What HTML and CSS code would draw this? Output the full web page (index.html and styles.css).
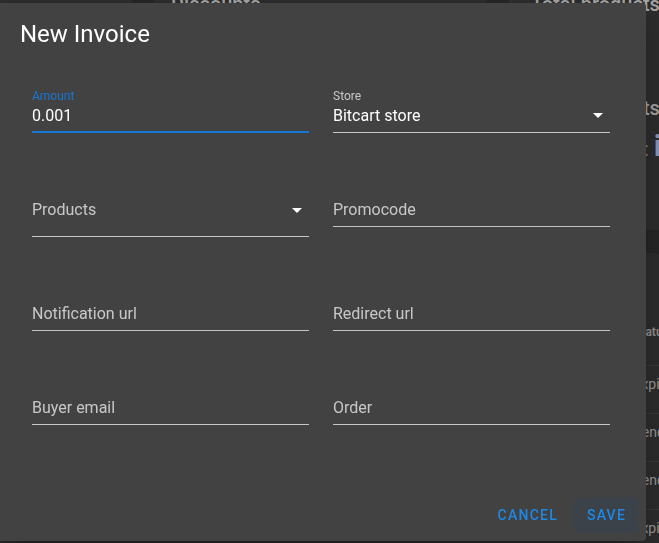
FILE: index.html
```html
<!DOCTYPE html>
<html lang="en">
<head>
<meta charset="utf-8">
<title>New Invoice</title>
<link rel="stylesheet" href="styles.css">
</head>
<body>
<div class="page">
  <div class="stats">
    <div class="card card-a"></div>
    <div class="card card-b">
      <div class="card-title">Discounts</div>
    </div>
    <div class="card card-c">
      <div class="card-title">Total products</div>
      <div class="stat-line">Total products</div>
      <div class="stat-value"><span class="stat-key">Status</span><span class="stat-colon">:</span><span class="stat-big">i</span></div>
    </div>
  </div>
  <div class="card table-card">
    <div class="table-top"></div>
    <div class="tbl-row tbl-head"><span>Date</span><span>Status</span></div>
    <div class="tbl-row"><span>2021</span><span>expired</span></div>
    <div class="tbl-row"><span>2021</span><span>pending</span></div>
    <div class="tbl-row"><span>2021</span><span>pending</span></div>
    <div class="tbl-row"><span>2021</span><span>expired</span></div>
  </div>
</div>

<div class="dialog">
  <div class="dialog-title">New Invoice</div>
  <div class="form">
    <div class="field field-focused">
      <div class="field-label">Amount</div>
      <div class="field-value">0.001</div>
    </div>
    <div class="field field-filled">
      <div class="field-label">Store</div>
      <div class="field-row">
        <span class="field-value">Bitcart store</span>
        <svg class="arrow arrow-filled" width="10" height="5" viewBox="0 0 10 5"><polygon points="0,0 10,0 5,5" fill="#ffffff"/></svg>
      </div>
    </div>
    <div class="field field-select">
      <div class="field-row">
        <span class="placeholder">Products</span>
        <svg class="arrow" width="10" height="5" viewBox="0 0 10 5"><polygon points="0,0 10,0 5,5" fill="#ffffff"/></svg>
      </div>
    </div>
    <div class="field field-empty"><span class="placeholder">Promocode</span></div>
    <div class="field field-empty"><span class="placeholder">Notification url</span></div>
    <div class="field field-empty"><span class="placeholder">Redirect url</span></div>
    <div class="field field-empty"><span class="placeholder">Buyer email</span></div>
    <div class="field field-empty"><span class="placeholder">Order</span></div>
  </div>
  <div class="actions">
    <button class="btn">Cancel</button>
    <button class="btn btn-save">Save</button>
  </div>
</div>
</body>
</html>
```
FILE: styles.css
```css
html, body {
  margin: 0;
  padding: 0;
}
body {
  width: 659px;
  height: 543px;
  overflow: hidden;
  background: #272727;
  font-family: Roboto, "Noto Sans", sans-serif;
}

/* background page (dimmed behind dialog) */
.page {
  display: flex;
  flex-direction: column;
  gap: 23px;
  margin-top: -28px;
}
.stats {
  display: flex;
  gap: 22px;
  height: 258px;
}
.card {
  background: #2e2e2e;
  border-radius: 4px;
  flex: none;
}
.card-a { width: 132px; }
.card-b { width: 333px; padding: 16px 17px; box-sizing: border-box; }
.card-c { width: 333px; padding: 16px 22px; box-sizing: border-box; }
.card-title {
  font-size: 20px;
  line-height: 32px;
  font-weight: 500;
  color: #a9a9a9;
  white-space: nowrap;
}
.stat-line {
  margin-top: 72px;
  font-size: 20px;
  line-height: 32px;
  font-weight: 500;
  color: #a9a9a9;
  white-space: nowrap;
}
.stat-value {
  display: flex;
  align-items: baseline;
  white-space: nowrap;
  line-height: 44px;
}
.stat-key {
  display: inline-block;
  width: 113px;
  font-size: 18px;
  color: #8d7d62;
}
.stat-colon {
  font-size: 20px;
  color: #8d7d62;
  margin-right: 5px;
}
.stat-big {
  font-size: 30px;
  font-weight: 700;
  color: #8e9dc2;
}
.table-card {
  height: 320px;
}
.table-top { height: 64px; }
.tbl-row {
  display: grid;
  grid-template-columns: 618px 1fr;
  border-top: 1px solid #3b3b3b;
  height: 48px;
  box-sizing: border-box;
  padding-top: 8px;
  font-size: 14px;
  line-height: 20px;
  color: #9d9d9d;
  white-space: nowrap;
}
.tbl-row span { padding-left: 16px; }
.tbl-head {
  border-top: none;
  padding-top: 7px;
  font-size: 12px;
  line-height: 16px;
  font-weight: 700;
  color: #909090;
}

/* dialog */
.dialog {
  position: fixed;
  left: -4px;
  top: 3px;
  width: 650px;
  height: 538px;
  box-sizing: border-box;
  background: #424242;
  border-radius: 4px;
  box-shadow: 0 11px 15px -7px rgba(0,0,0,.2), 0 24px 38px 3px rgba(0,0,0,.14), 0 9px 46px 8px rgba(0,0,0,.12);
  display: flex;
  flex-direction: column;
}
.dialog-title {
  padding: 15px 24px 0;
  font-size: 24px;
  line-height: 32px;
  font-weight: 400;
  color: #ffffff;
}
.form {
  margin-top: 38px;
  padding: 0 36px;
  display: grid;
  grid-template-columns: 1fr 1fr;
  column-gap: 24px;
  row-gap: 67px;
  align-items: start;
}
.field {
  border-bottom: 1px solid rgba(255,255,255,0.7);
  padding-bottom: 6px;
}
.field-focused {
  border-bottom: 2px solid #1976d2;
  padding-bottom: 5px;
}
.field-select {
  padding-bottom: 16px;
}
.field-label {
  font-size: 12px;
  line-height: 16px;
  color: rgba(255,255,255,0.7);
  margin-bottom: 2px;
}
.field-focused .field-label {
  color: #1976d2;
}
.field-value {
  font-size: 16px;
  line-height: 20px;
  color: #ffffff;
}
.placeholder {
  font-size: 16px;
  line-height: 20px;
  color: rgba(255,255,255,0.7);
}
.field-row {
  display: flex;
  align-items: flex-start;
  justify-content: space-between;
}
.arrow {
  display: block;
  margin-top: 8px;
  margin-right: 7px;
}
.arrow-filled {
  margin-top: 7px;
}
.actions {
  margin-top: auto;
  padding: 8px;
  display: flex;
  justify-content: flex-end;
}
.btn {
  height: 36px;
  padding: 0 16px;
  border: none;
  border-radius: 4px;
  background: transparent;
  color: #1e88e5;
  font-family: Roboto, "Noto Sans", sans-serif;
  font-size: 14px;
  font-weight: 500;
  letter-spacing: 1.25px;
  text-transform: uppercase;
  line-height: 36px;
}
.btn-save {
  width: 64px;
  padding: 0 0 0 1px;
  text-align: center;
  background: #3c4249;
}
```
